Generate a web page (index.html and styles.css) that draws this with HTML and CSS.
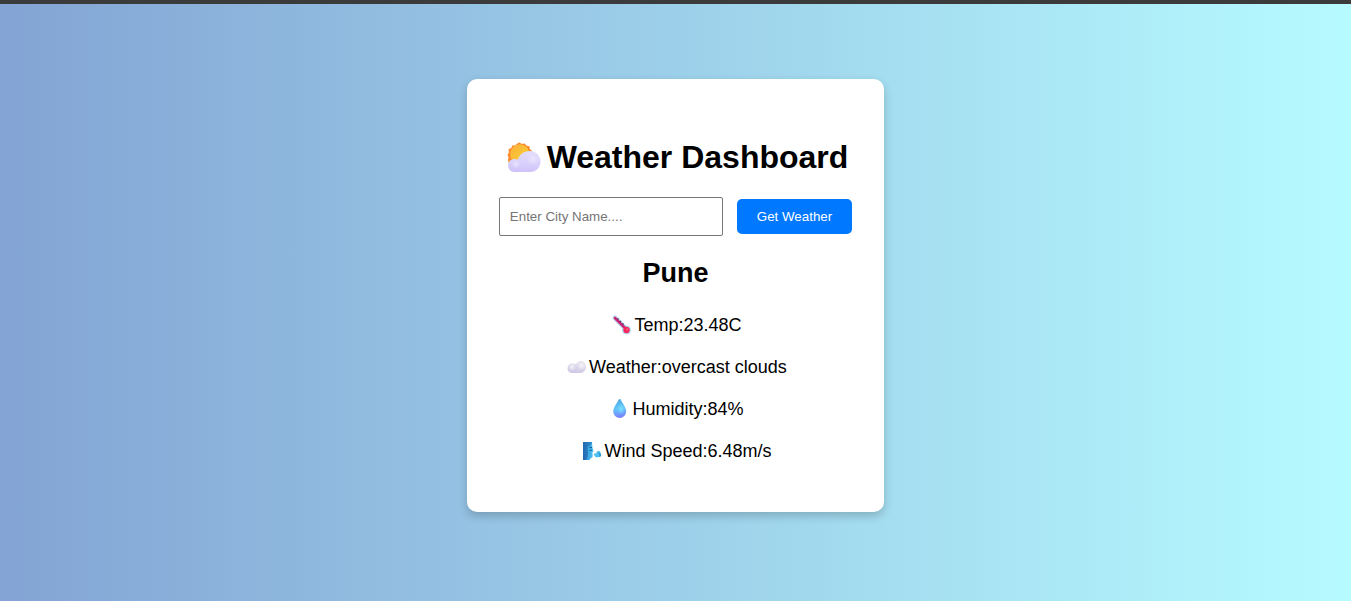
FILE: index.html
```html
<!DOCTYPE html>
<html lang="en">
<head>
<meta charset="utf-8">
<meta name="viewport" content="width=device-width, initial-scale=1">
<title>Weather Dashboard</title>
<link rel="stylesheet" href="styles.css">
</head>
<body>
<main class="card">
  <h1 class="title">
    <svg class="title-icon" viewBox="0 0 44 36" aria-hidden="true">
      <defs>
        <linearGradient id="sun" x1="0" y1="0" x2="1" y2="1"><stop offset="0" stop-color="#fbb03c"/><stop offset="1" stop-color="#f8d431"/></linearGradient>
        <linearGradient id="cloud" x1="0.6" y1="0" x2="0.5" y2="1"><stop offset="0" stop-color="#e3ddfb"/><stop offset="0.55" stop-color="#dad1fc"/><stop offset="1" stop-color="#cfc2fa"/></linearGradient>
        <radialGradient id="puff"><stop offset="0" stop-color="#ebe7fb"/><stop offset="1" stop-color="#e3ddfb" stop-opacity="0"/></radialGradient>
      </defs>
      <path d="M16.500 3.500l2.500 1.500 2.800-.5 1.700 2.300 2.900.5.500 2.900 2.300 1.700-.5 2.800 1.500 2.300-3 9-16 0-5.500-2-.7-2.900.5-2.800-1-2.500 1.500-2.600-.5-2.900 2.800-1.200 1-2.700 2.900 0 2-2z" fill="#fa8a2d"/>
      <circle cx="16.800" cy="15" r="9.700" fill="url(#sun)"/>
      <path d="M11 33a6.500 6.500 0 0 1-6-6.500c0-3.800 3-6.500 6.500-6.500 1.200 0 2.300.2 3.500.5 1.500-5 5.800-8.500 11.500-8.500 6.300 0 11 4.700 11 10.500 0 6.300-4.500 10.500-10 10.500z" fill="url(#cloud)"/>
      <circle cx="13" cy="25" r="5" fill="url(#puff)"/>
      <circle cx="30" cy="20" r="7" fill="url(#puff)"/>
    </svg>Weather Dashboard
  </h1>
  <form class="search">
    <input class="city" type="text" placeholder="Enter City Name...." aria-label="City name">
    <button class="submit" type="button">Get Weather</button>
  </form>
  <section class="result">
    <h2 class="place">Pune</h2>
    <p class="reading">
      <svg class="icon" viewBox="0 0 25 24" aria-hidden="true">
        <path d="M6 5l10 10" stroke="#b9dbf7" stroke-width="5" stroke-linecap="round"/>
        <circle cx="17.500" cy="17" r="4.600" fill="#b9dbf7"/>
        <path d="M6 5l11 11" stroke="#cb2872" stroke-width="2.600" stroke-linecap="round"/>
        <circle cx="17.500" cy="17" r="3.200" fill="#f5285c"/>
        <circle cx="18.300" cy="16.300" r="1" fill="#ff6a80"/>
        <path d="M9.500 5.500l-1 1M12 8l-1 1M14.500 10.500l-1 1" stroke="#432f63" stroke-width="1.200"/>
      </svg>Temp:23.48C
    </p>
    <p class="reading">
      <svg class="icon" viewBox="0 0 25 24" aria-hidden="true">
        <defs>
          <linearGradient id="grey" x1="0.7" y1="0" x2="0.5" y2="1"><stop offset="0" stop-color="#e9e6f0"/><stop offset="1" stop-color="#cfc8e6"/></linearGradient>
          <radialGradient id="lit"><stop offset="0" stop-color="#f5f4f7"/><stop offset="1" stop-color="#f0eef4" stop-opacity="0"/></radialGradient>
        </defs>
        <path d="M8 18a4.500 4.500 0 0 1-4.500-4.500C3.500 10.500 5.500 8.500 8 8.500c2 0 3 .3 4 .7C12.700 7.300 14.500 6 17 6c3 0 5 2.500 5 5.500 0 4-2.500 6.500-6 6.500z" fill="url(#grey)"/>
        <circle cx="8" cy="12.200" r="3.700" fill="url(#lit)"/>
        <circle cx="17.500" cy="10.800" r="4.500" fill="url(#lit)"/>
      </svg>Weather:overcast clouds
    </p>
    <p class="reading">
      <svg class="icon" viewBox="0 0 25 24" aria-hidden="true">
        <defs>
          <linearGradient id="water" x1="0.4" y1="0" x2="0.5" y2="1"><stop offset="0" stop-color="#4ea9df"/><stop offset="0.5" stop-color="#63c6fb"/><stop offset="1" stop-color="#7e7dfb"/></linearGradient>
          <radialGradient id="shine"><stop offset="0" stop-color="#79e0ff"/><stop offset="1" stop-color="#79e0ff" stop-opacity="0"/></radialGradient>
        </defs>
        <path d="M12.700 2c.6 0 .9.500 1.200 1.100 1.600 3.500 5.300 7.500 5.300 11.400a6.500 6.500 0 0 1-13 0c0-3.900 3.700-7.900 5.300-11.400.3-.6.600-1.100 1.200-1.100z" fill="url(#water)"/>
        <ellipse cx="14" cy="12" rx="4" ry="5.500" fill="url(#shine)"/>
      </svg>Humidity:84%
    </p>
    <p class="reading">
      <svg class="icon" viewBox="0 0 25 24" aria-hidden="true">
        <defs>
          <linearGradient id="hair" x1="0" y1="0" x2="1" y2="0"><stop offset="0" stop-color="#2168ad"/><stop offset="1" stop-color="#3590d2"/></linearGradient>
          <linearGradient id="skin" x1="0" y1="0" x2="1" y2="0"><stop offset="0" stop-color="#2f9cdc"/><stop offset="1" stop-color="#50c4f5"/></linearGradient>
        </defs>
        <path d="M4 3h9v5l-3 6-2 7H4z" fill="url(#hair)"/>
        <path d="M8.500 8.500c1-1.500 2-1.500 4.500-4 .5 1.500.4 2.500.3 3.500l1.200 4c.2.600-.5.900-1 .9v1.300l-.3.600.6 1-.3 2.200c-.8 1.300-2.500 1-3 3H7.500c.8-3 2-4 1.800-6z" fill="url(#skin)"/>
        <path d="M10.500 8.200l2.500.5M10.700 11.300h2.200" stroke="#174f86" stroke-width="1.100"/>
        <circle cx="15.700" cy="15.400" r="1" fill="#50bce8"/>
        <circle cx="19.500" cy="14" r="2.100" fill="#45b6e8"/>
        <circle cx="20.300" cy="16" r="2" fill="#3299cf"/>
        <circle cx="18" cy="16.200" r="2.200" fill="#4cc2ee"/>
      </svg>Wind Speed:6.48m/s
    </p>
  </section>
</main>
</body>
</html>
```
FILE: styles.css
```css
* {
  box-sizing: border-box;
}

body {
  display: flex;
  justify-content: center;
  align-items: center;
  min-height: 100vh;
  margin: 0;
  padding-bottom: 14px;
  border-top: 4px solid #3b3b3b;
  background: linear-gradient(to right, #83a4d4, #b6fbff);
  color: #000;
  font-family: Arial, "Liberation Sans", sans-serif;
}

.card {
  padding: 56px 32px 49px;
  border-radius: 10px;
  background: #fff;
  box-shadow: 0 4px 10px rgba(0, 0, 0, 0.2);
}

.title {
  display: flex;
  justify-content: center;
  align-items: center;
  margin: 0 0 18px;
  font-size: 32px;
  line-height: 44px;
}

.title-icon {
  flex: none;
  width: 44px;
  height: 36px;
}

.search {
  display: flex;
  justify-content: center;
  align-items: center;
  gap: 14px;
}

.city {
  width: 224px;
  height: 39px;
  padding: 10px;
  border: 1px solid #767676;
  border-radius: 2px;
  background: #fff;
  font-family: inherit;
}

.city::placeholder {
  color: #757575;
}

.submit {
  height: 35px;
  padding: 0 20px;
  border: 0;
  border-radius: 5px;
  background: #0078ff;
  color: #fff;
  font-family: inherit;
  cursor: pointer;
}

.result {
  font-size: 18px;
  line-height: 24px;
}

.place {
  margin: 22px 0 25px;
  font-size: 27px;
  line-height: 30px;
  text-align: center;
}

.reading {
  display: flex;
  justify-content: center;
  align-items: center;
  margin: 0;
}

.reading + .reading {
  margin-top: 18px;
}

.icon {
  flex: none;
  width: 25px;
  height: 24px;
}
```
